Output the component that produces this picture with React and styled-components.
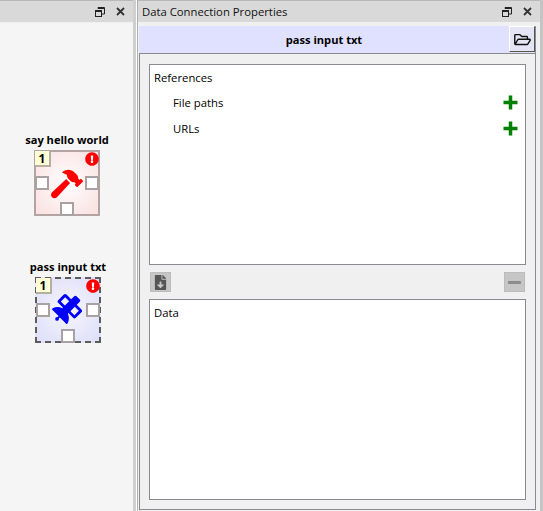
import React from "react";
import styled, { createGlobalStyle } from "styled-components";
import {
  FaExclamationCircle,
  FaFileDownload,
  FaHammer,
  FaMinus,
  FaRegFolderOpen,
  FaSatellite,
} from "react-icons/fa";

const GlobalStyle = createGlobalStyle`
  html, body {
    margin: 0;
    padding: 0;
    background: #f0f0f0;
  }
  body {
    font-family: "Open Sans", "Noto Sans", sans-serif;
    font-size: 11.3px;
    color: #000;
  }
`;

const Window = styled.div`
  width: 543px;
  height: 511px;
  display: flex;
  overflow: hidden;
  background: #f0f0f0;
`;

const LeftDock = styled.div`
  width: 133px;
  display: flex;
  flex-direction: column;
  flex: none;
`;

const Splitter = styled.div`
  width: 4px;
  flex: none;
  box-sizing: border-box;
  border-left: 3px solid #cfcfcf;
  background: #fff;
`;

const RightDock = styled.div`
  flex: 1;
  min-width: 0;
  display: flex;
  flex-direction: column;
  border-left: 1px solid #b0b0b0;
  border-right: 3px solid #c4c4c4;
`;

const TitleBar = styled.div`
  height: 22px;
  flex: none;
  box-sizing: border-box;
  border-top: 1px solid #b9b9b9;
  background: #d9d9d9;
  display: flex;
  align-items: center;
  justify-content: flex-end;
  padding: 0 8px 0 4px;
  gap: 11px;
`;

const TitleText = styled.span`
  margin-right: auto;
  color: #111;
`;

const Canvas = styled.div`
  position: relative;
  flex: 1;
  margin-top: 1px;
  background: #f5f5f5;
`;

const Node = styled.div`
  position: absolute;
  left: ${(p) => p.$x}px;
  top: ${(p) => p.$y}px;
  width: 66px;
  height: 66px;
  box-sizing: border-box;
  border: ${(p) => (p.$selected ? "2px dashed #5c5c5c" : "2px solid #b3a3a3")};
  background: ${(p) => p.$bg};
`;

const NodeLabel = styled.div`
  position: absolute;
  left: -30px;
  right: -30px;
  top: -20px;
  text-align: center;
  font-weight: 700;
  font-size: 11.1px;
  line-height: 16px;
  white-space: nowrap;
`;

const RankBadge = styled.div`
  position: absolute;
  left: -1px;
  top: -1px;
  width: 16px;
  height: 16px;
  box-sizing: border-box;
  border: 2px solid #b5b0a0;
  border-width: 0 2px 2px 0;
  background: #ffffd8;
  font-size: 12px;
  font-weight: 700;
  line-height: 15px;
  text-align: center;
`;

const Alert = styled(FaExclamationCircle)`
  position: absolute;
  right: -1px;
  top: 0;
  width: 14px;
  height: 14px;
  color: #f00;
  background: radial-gradient(circle, #fff 40%, transparent 45%);
`;

const Connector = styled.div`
  position: absolute;
  width: 14px;
  height: 14px;
  box-sizing: border-box;
  background: #fff;
  border: 2px solid #aaa2a2;
  ${(p) => p.$side === "left" && "left: -1px; top: 24px;"}
  ${(p) => p.$side === "right" && "right: -1px; top: 24px;"}
  ${(p) => p.$side === "bottom" && "left: 24px; bottom: -2px;"}
`;

const NodeIcon = styled.div`
  position: absolute;
  left: ${(p) => p.$left}px;
  top: ${(p) => p.$top}px;
  width: 32px;
  height: 32px;
  color: ${(p) => p.$color};
  display: flex;
  align-items: center;
  justify-content: center;
  svg {
    display: block;
    width: ${(p) => p.$size}px;
    height: ${(p) => p.$size}px;
  }
`;

const Props = styled.div`
  flex: 1;
  min-height: 0;
  margin: 4px 4px 1px 1px;
  display: flex;
  flex-direction: column;
  border-right: 1px solid #8a8a90;
`;

const Header = styled.div`
  height: 28px;
  flex: none;
  box-sizing: border-box;
  position: relative;
  padding-right: 26px;
  background: #e0e0ff;
  border-bottom: 1px solid #8a8a90;
  display: flex;
  align-items: center;
  justify-content: center;
  font-weight: 700;
  font-size: 11.1px;
`;

const FolderButton = styled.div`
  position: absolute;
  right: 0;
  top: 0;
  width: 26px;
  height: 26px;
  box-sizing: border-box;
  background: #e4e4f4;
  border: 1px solid;
  border-color: #fff #555 #555 #fff;
  display: flex;
  align-items: center;
  justify-content: center;
  color: #111;
  svg {
    width: 17px;
    height: 15px;
  }
`;

const Body = styled.div`
  flex: 1;
  min-height: 0;
  display: flex;
  flex-direction: column;
  padding: 10px 9px 9px 9px;
  border-left: 1px solid #8a8a90;
  border-bottom: 1px solid #8a8a90;
  background: #f0f0f0;
`;

const ListBox = styled.div`
  height: 201px;
  flex: none;
  box-sizing: border-box;
  background: #fff;
  border: 1px solid #8a8a90;
  padding: 4px 7px 0 4px;
`;

const TreeRow = styled.div`
  height: 26px;
  display: flex;
  align-items: center;
  padding-left: ${(p) => p.$indent || 0}px;
  justify-content: space-between;
`;

const RootRow = styled.div`
  height: 20px;
  line-height: 18px;
`;

const AddIcon = () => (
  <svg width="15" height="15" viewBox="0 0 15 15" fill="#008000">
    <path d="M5.75 0.5h3.5v5.25h5.25v3.5H9.25v5.25h-3.5V9.25H0.5v-3.5h5.25z" />
  </svg>
);

const Toolbar = styled.div`
  height: 34px;
  flex: none;
  padding: 0 1px;
  display: flex;
  align-items: center;
  justify-content: space-between;
`;

const ToolButton = styled.div`
  width: 21px;
  height: 20px;
  box-sizing: border-box;
  background: #c6c6c6;
  border: 1px solid #bcbcbc;
  display: flex;
  align-items: center;
  justify-content: center;
  color: ${(p) => p.$color};
  svg {
    width: ${(p) => p.$size}px;
    height: ${(p) => p.$size}px;
  }
`;

const RestoreIcon = () => (
  <svg width="10" height="10" viewBox="0 0 10 10" fill="none" stroke="#222" strokeWidth="1">
    <rect x="0.5" y="3.5" width="6" height="6" />
    <path d="M3 1.5V0.5H9.5V7H7" />
    <path d="M0 4.5H7M3 1.5H10" />
  </svg>
);

const CloseIcon = () => (
  <svg width="9" height="9" viewBox="0 0 9 9" stroke="#333" strokeWidth="1.8">
    <path d="M1 1L8 8M8 1L1 8" />
  </svg>
);

const DockButtons = () => (
  <>
    <RestoreIcon />
    <CloseIcon />
  </>
);

const DesignNode = ({ name, x, y, bg, color, selected, icon, size, iconLeft, iconTop }) => (
  <Node $x={x} $y={y} $bg={bg} $selected={selected}>
    <NodeLabel>{name}</NodeLabel>
    <RankBadge>1</RankBadge>
    <Alert />
    <Connector $side="left" />
    <Connector $side="right" />
    <Connector $side="bottom" />
    <NodeIcon $color={color} $size={size} $left={iconLeft} $top={iconTop}>
      {icon}
    </NodeIcon>
  </Node>
);

export default function App() {
  return (
    <Window>
      <GlobalStyle />
      <LeftDock>
        <TitleBar>
          <DockButtons />
        </TitleBar>
        <Canvas>
          <DesignNode
            name="say hello world"
            x={34}
            y={127}
            bg="radial-gradient(circle, #fff 0%, #fadfdf 100%)"
            color="#f00"
            size={32}
            iconLeft={15}
            iconTop={16}
            icon={<FaHammer />}
          />
          <DesignNode
            name="pass input txt"
            x={35}
            y={254}
            bg="radial-gradient(circle, #f6f6ff 0%, #dedef8 100%)"
            color="#00f"
            selected
            size={30}
            iconLeft={14}
            iconTop={14}
            icon={<FaSatellite />}
          />
        </Canvas>
      </LeftDock>
      <Splitter />
      <RightDock>
        <TitleBar>
          <TitleText>Data Connection Properties</TitleText>
          <DockButtons />
        </TitleBar>
        <Props>
          <Header>
            pass input txt
            <FolderButton>
              <FaRegFolderOpen />
            </FolderButton>
          </Header>
          <Body>
            <ListBox>
              <RootRow>References</RootRow>
              <TreeRow $indent={19}>
                File paths
                <AddIcon />
              </TreeRow>
              <TreeRow $indent={19}>
                URLs
                <AddIcon />
              </TreeRow>
            </ListBox>
            <Toolbar>
              <ToolButton $color="#555" $size={15}>
                <FaFileDownload />
              </ToolButton>
              <ToolButton $color="#8c8c8c" $size={15}>
                <FaMinus />
              </ToolButton>
            </Toolbar>
            <ListBox>
              <RootRow>Data</RootRow>
            </ListBox>
          </Body>
        </Props>
      </RightDock>
    </Window>
  );
}
